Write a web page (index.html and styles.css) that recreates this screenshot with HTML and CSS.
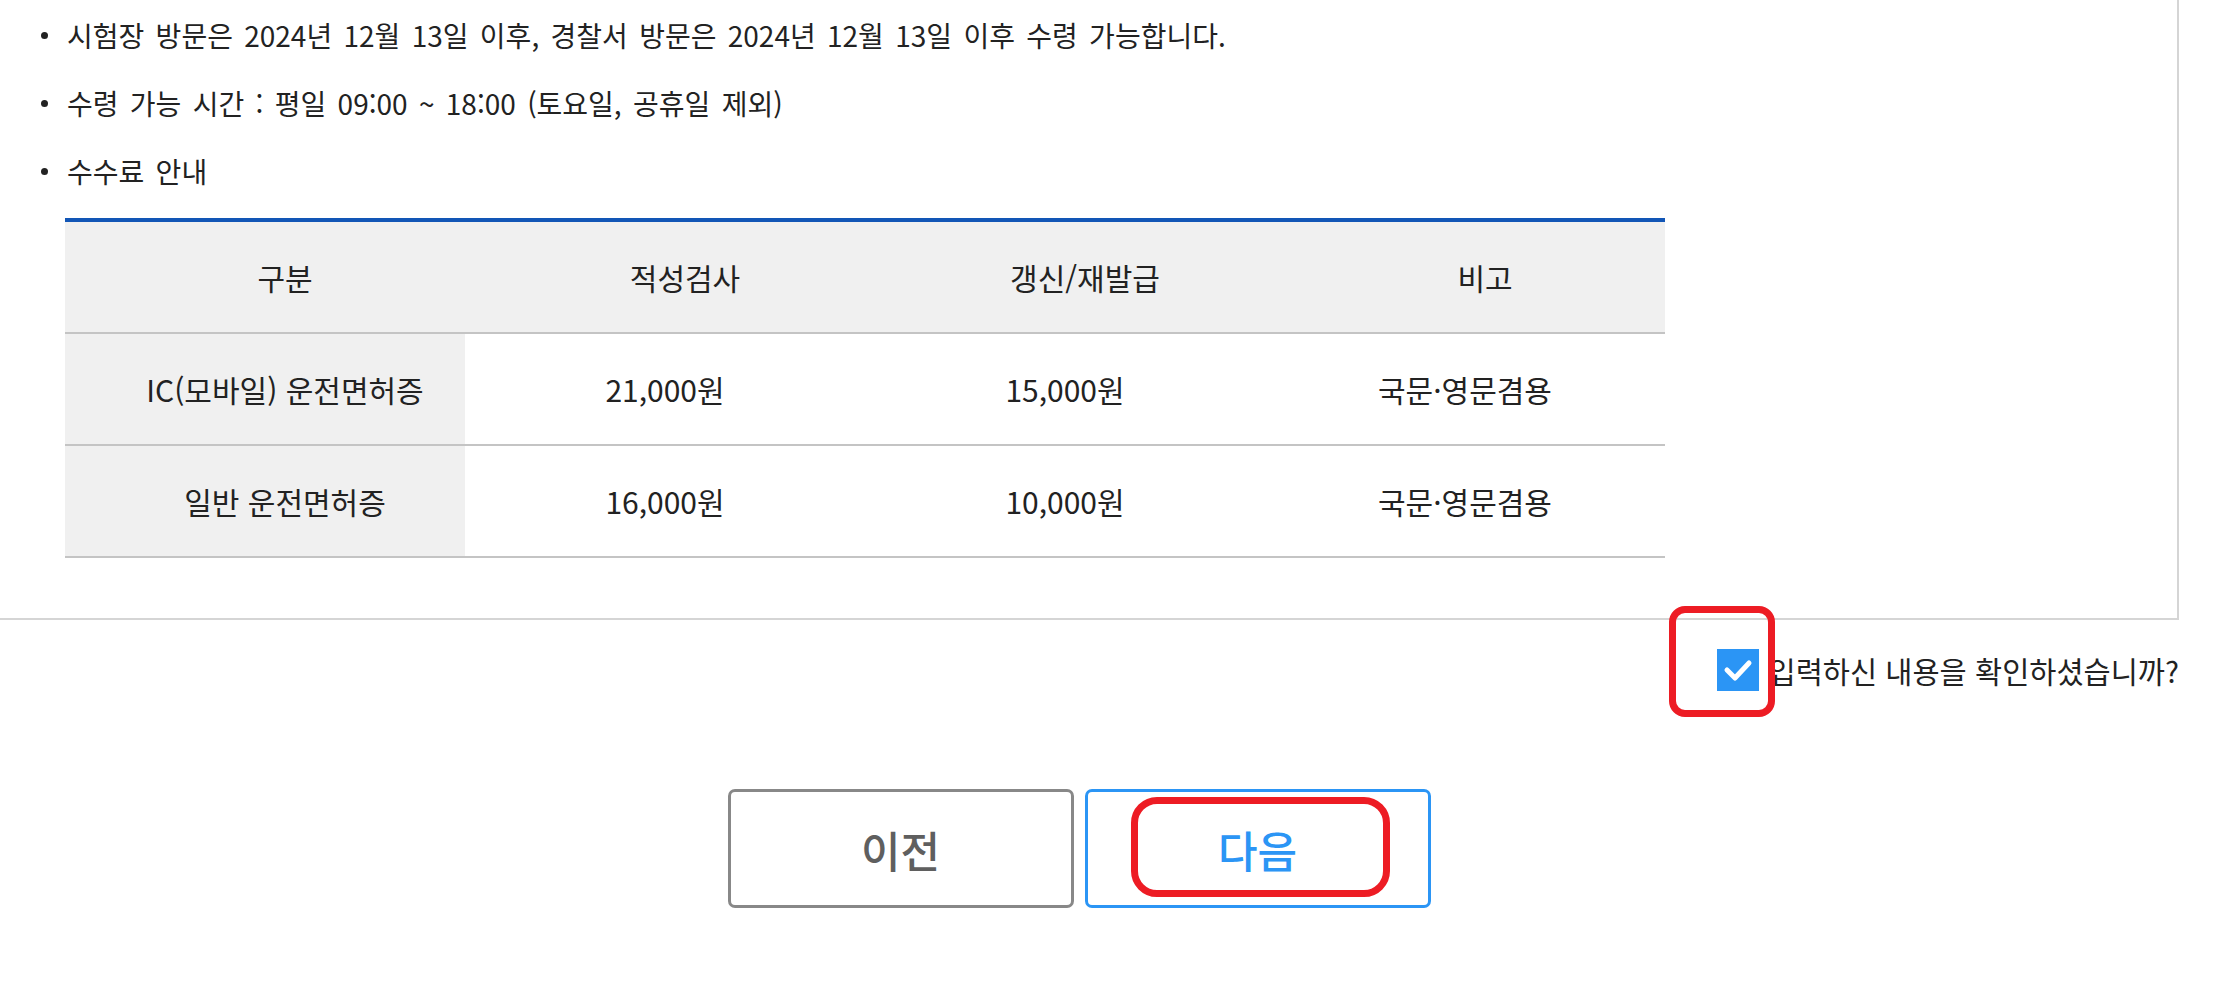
FILE: index.html
```html
<!DOCTYPE html>
<html lang="ko">
<head>
<meta charset="utf-8">
<title>수령 안내</title>
<link rel="stylesheet" href="styles.css">
</head>
<body>
<div class="panel">
  <ul class="notes">
    <li>시험장 방문은 2024년 12월 13일 이후, 경찰서 방문은 2024년 12월 13일 이후 수령 가능합니다.</li>
    <li>수령 가능 시간 : 평일 09:00 ~ 18:00 (토요일, 공휴일 제외)</li>
    <li>수수료 안내</li>
  </ul>
  <table class="fee">
    <thead>
      <tr>
        <th>구분</th>
        <th>적성검사</th>
        <th>갱신/재발급</th>
        <th>비고</th>
      </tr>
    </thead>
    <tbody>
      <tr>
        <th class="rowhead">IC(모바일) 운전면허증</th>
        <td>21,000원</td>
        <td>15,000원</td>
        <td>국문·영문겸용</td>
      </tr>
      <tr>
        <th class="rowhead">일반 운전면허증</th>
        <td>16,000원</td>
        <td>10,000원</td>
        <td>국문·영문겸용</td>
      </tr>
    </tbody>
  </table>
</div>

<div class="confirm">
  <span class="check-wrap">
    <span class="checkbox">
      <svg viewBox="0 0 42 42" width="42" height="42"><polyline points="10,21 18,29 32,14" fill="none" stroke="#ffffff" stroke-width="5" stroke-linecap="round" stroke-linejoin="round"/></svg>
    </span>
    <span class="mark mark-check"></span>
  </span>
  <span class="confirm-label">입력하신 내용을 확인하셨습니까?</span>
</div>

<div class="actions">
  <button class="btn btn-prev" type="button">이전</button>
  <button class="btn btn-next" type="button">다음<span class="mark mark-next"></span></button>
</div>
</body>
</html>
```

FILE: styles.css
```css
html, body {
  margin: 0;
  padding: 0;
  background: #ffffff;
}

body {
  font-family: "Noto Sans CJK KR", "Noto Sans", sans-serif;
  color: #222222;
  width: 2220px;
}

.panel {
  width: 2177px;
  border-right: 2px solid #d5d5d5;
  border-bottom: 2px solid #d5d5d5;
  padding-bottom: 60px;
}

.notes {
  list-style: none;
  margin: 0;
  padding: 15px 0 0 41px;
}

.notes li {
  display: flex;
  align-items: center;
  gap: 19px;
  font-size: 28px;
  line-height: 40px;
  height: 40px;
  margin-bottom: 28px;
  word-spacing: 3.5px;
  color: #222222;
  white-space: nowrap;
}

.notes li:last-child {
  margin-bottom: 27px;
}

.notes li::before {
  content: "";
  flex: none;
  width: 7px;
  height: 7px;
  border-radius: 50%;
  background: #222222;
}

.fee {
  margin-left: 65px;
  width: 1600px;
  border-collapse: separate;
  border-spacing: 0;
  table-layout: fixed;
  font-size: 30px;
  color: #222222;
}

.fee th,
.fee td {
  font-weight: 400;
  text-align: center;
  vertical-align: middle;
  line-height: 40px;
  padding: 35px 0;
  border-bottom: 2px solid #c4c4c4;
  white-space: nowrap;
}

.fee th {
  padding-left: 40px;
}

.fee thead th {
  background: #f0f0f0;
  border-top: 4px solid #1256b6;
}

.fee .rowhead {
  background: #f0f0f0;
}

.confirm {
  width: 2179px;
  margin-top: 29px;
  display: flex;
  justify-content: flex-end;
  align-items: center;
  height: 42px;
}

.check-wrap {
  position: relative;
  display: block;
  width: 42px;
  height: 42px;
  margin-right: 10px;
}

.checkbox {
  display: block;
  width: 42px;
  height: 42px;
  background: #2b95f5;
}

.checkbox svg {
  display: block;
}

.confirm-label {
  font-size: 29.5px;
  line-height: 40px;
  color: #222222;
  white-space: nowrap;
}

.mark {
  position: absolute;
  border: 7px solid #ed1c24;
  box-sizing: border-box;
  pointer-events: none;
}

.mark-check {
  left: -48px;
  top: -43px;
  width: 106px;
  height: 111px;
  border-radius: 16px;
}

.actions {
  width: 2158px;
  margin-top: 98px;
  display: flex;
  justify-content: center;
  gap: 11px;
}

.btn {
  position: relative;
  width: 346px;
  height: 119px;
  box-sizing: border-box;
  background: #ffffff;
  border-radius: 7px;
  font-family: "Noto Sans CJK KR", "Noto Sans", sans-serif;
  font-size: 43px;
  font-weight: 500;
  padding: 0;
  cursor: pointer;
}

.btn-prev {
  border: 3px solid #888888;
  color: #5f5f5f;
}

.btn-next {
  border: 3px solid #2b95f5;
  color: #2b95f5;
}

.mark-next {
  left: 43px;
  top: 5px;
  width: 259px;
  height: 100px;
  border-radius: 26px;
}
```
